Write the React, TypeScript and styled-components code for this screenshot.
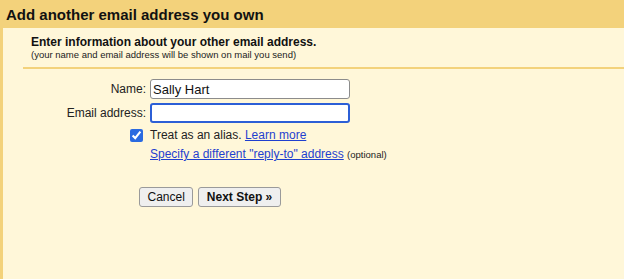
import React from "react";
import styled, { createGlobalStyle } from "styled-components";

const GlobalStyle = createGlobalStyle`
  html, body {
    margin: 0;
    padding: 0;
    background: #fff7d9;
  }
  body {
    font-family: "Liberation Sans", Arial, sans-serif;
    color: #222;
  }
`;

const Page = styled.div`
  width: 624px;
  height: 279px;
  display: flex;
  flex-direction: column;
  background: #fff7d9;
  overflow: hidden;
`;

const Header = styled.h1`
  margin: 0;
  height: 28px;
  box-sizing: border-box;
  padding: 1px 0 0 6px;
  background: #f3d27b;
  font-size: 15px;
  line-height: 27px;
  font-weight: bold;
  color: #111;
`;

const Body = styled.div`
  flex: 1;
  border-left: 3px solid #f3d27b;
  padding-top: 7px;
  display: flex;
  flex-direction: column;
`;

const Intro = styled.div`
  padding-left: 28px;
`;

const IntroTitle = styled.div`
  font-size: 12px;
  line-height: 14px;
  font-weight: bold;
  color: #111;
`;

const IntroNote = styled.div`
  font-size: 9.5px;
  line-height: 11px;
  color: #222;
`;

const Divider = styled.div`
  margin: 7px 0 0 20px;
  height: 2px;
  background: #f3d27b;
`;

const Form = styled.div`
  margin-top: 10px;
  display: grid;
  grid-template-columns: 143px 200px;
  column-gap: 4px;
  row-gap: 4px;
  align-items: center;
`;

const Label = styled.label`
  justify-self: end;
  font-size: 12px;
  line-height: 20px;
`;

const TextInput = styled.input<{ $focused?: boolean }>`
  box-sizing: border-box;
  width: 200px;
  height: 20px;
  margin: 0;
  padding: 0 2px;
  font-family: "Liberation Sans", Arial, sans-serif;
  font-size: 13px;
  color: #111;
  background: #fff;
  border-radius: 3px;
  border: ${(p) => (p.$focused ? "2px solid #2c5fd6" : "1px solid #8c8c8c")};
  outline: none;
`;

const CheckCell = styled.div`
  justify-self: end;
  display: flex;
  align-items: center;
  height: 16px;
  padding-right: 3px;
`;

const Check = styled.input`
  width: 13px;
  height: 13px;
  margin: 0;
  accent-color: #2a6ae0;
`;

const Line = styled.div<{ $h: number }>`
  font-size: 12px;
  line-height: ${(p) => p.$h}px;
  white-space: nowrap;
`;

const Link = styled.a`
  color: #1f3fcf;
  text-decoration: underline;
  cursor: pointer;
`;

const Small = styled.span`
  font-size: 9.5px;
  color: #222;
`;

const Actions = styled.div`
  margin: 25px 0 0 136px;
  display: flex;
  gap: 5px;
`;

const Button = styled.button<{ $primary?: boolean }>`
  height: 20px;
  padding: 0 7.5px;
  margin: 0;
  font-family: "Liberation Sans", Arial, sans-serif;
  font-size: 12px;
  font-weight: ${(p) => (p.$primary ? "bold" : "normal")};
  color: #111;
  background: #efefef;
  border: 1px solid #9a9a9a;
  border-radius: 3px;
`;

export default function App() {
  return (
    <Page>
      <GlobalStyle />
      <Header>Add another email address you own</Header>
      <Body>
        <Intro>
          <IntroTitle>Enter information about your other email address.</IntroTitle>
          <IntroNote>
            (your name and email address will be shown on mail you send)
          </IntroNote>
        </Intro>
        <Divider />
        <Form>
          <Label>Name:</Label>
          <TextInput defaultValue="Sally Hart" />
          <Label>Email address:</Label>
          <TextInput $focused defaultValue="" />
          <CheckCell>
            <Check type="checkbox" defaultChecked />
          </CheckCell>
          <Line $h={16}>
            Treat as an alias. <Link>Learn more</Link>
          </Line>
          <div />
          <Line $h={14}>
            <Link>Specify a different "reply-to" address</Link>{" "}
            <Small>(optional)</Small>
          </Line>
        </Form>
        <Actions>
          <Button>Cancel</Button>
          <Button $primary>Next Step »</Button>
        </Actions>
      </Body>
    </Page>
  );
}
